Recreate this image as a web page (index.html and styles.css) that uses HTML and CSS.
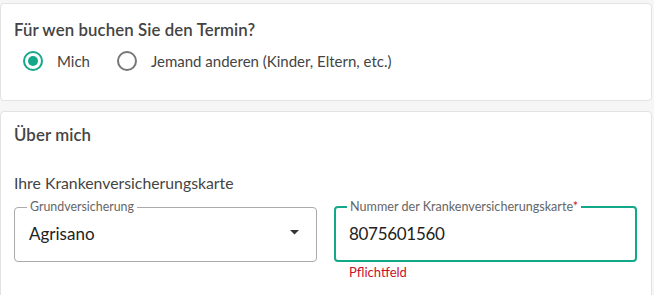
FILE: index.html
```html
<!DOCTYPE html>
<html lang="de">
<head>
<meta charset="utf-8">
<link rel="stylesheet" href="styles.css">
</head>
<body>
<div class="page">
  <section class="card card-who">
    <h2 class="title">Für wen buchen Sie den Termin?</h2>
    <div class="radios">
      <label class="radio">
        <span class="dot checked"></span>
        <span class="radio-text">Mich</span>
      </label>
      <label class="radio">
        <span class="dot"></span>
        <span class="radio-text">Jemand anderen (Kinder, Eltern, etc.)</span>
      </label>
    </div>
  </section>
  <section class="card card-me">
    <h2 class="title">Über mich</h2>
    <div class="subtitle">Ihre Krankenversicherungskarte</div>
    <div class="fields">
      <div class="field-wrap">
        <fieldset class="field">
          <legend class="legend">Grundversicherung</legend>
          <div class="value">Agrisano</div>
          <svg class="caret" width="10" height="5" viewBox="0 0 10 5"><path d="M0 0 L10 0 L5 5 Z" fill="#333"/></svg>
        </fieldset>
      </div>
      <div class="field-wrap">
        <fieldset class="field focused">
          <legend class="legend">Nummer der Krankenversicherungskarte<span class="req">*</span></legend>
          <div class="value">8075601560</div>
        </fieldset>
        <div class="error">Pflichtfeld</div>
      </div>
    </div>
  </section>
</div>
</body>
</html>
```

FILE: styles.css
```css
html, body {
  margin: 0;
  padding: 0;
  background: #f6f6f6;
  height: 295px;
  overflow: hidden;
}
body {
  font-family: Lato, "Noto Sans", sans-serif;
  color: #444;
  width: 654px;
}
.page {
  padding: 3px 2px 0 0;
  display: flex;
  flex-direction: column;
  gap: 10px;
}
.card {
  background: #fff;
  border: 1px solid #e2e2e2;
  border-radius: 4px;
  box-sizing: border-box;
}
.card-who {
  height: 98px;
  padding: 16px 13px 0;
}
.card-me {
  padding: 13px 13px 0;
  height: 200px;
}
.title {
  margin: 0;
  font-size: 16.8px;
  font-weight: 600;
  color: #444;
  line-height: 20px;
  letter-spacing: 0.1px;
}
.radios {
  display: flex;
  gap: 27px;
  margin-top: 11px;
  padding-left: 9px;
}
.radio {
  display: flex;
  align-items: center;
  gap: 14px;
  font-size: 15px;
  color: #444;
}
.dot {
  width: 16px;
  height: 16px;
  border: 2px solid #777;
  border-radius: 50%;
  display: flex;
  align-items: center;
  justify-content: center;
}
.dot.checked {
  border-color: #14a88b;
}
.dot.checked::after {
  content: "";
  width: 10px;
  height: 10px;
  border-radius: 50%;
  background: #14a88b;
}
.subtitle {
  margin-top: 28px;
  font-size: 15.8px;
  color: #444;
  line-height: 20px;
}
.fields {
  display: flex;
  gap: 17px;
  margin-top: 7px;
}
.field-wrap {
  width: 303px;
}
.field {
  margin: 0;
  box-sizing: border-box;
  height: 62px;
  border: 1px solid #aaa;
  border-radius: 4px;
  padding: 0 14px;
  position: relative;
  display: flex;
  align-items: center;
}
.field.focused {
  border: 2px solid #14a88b;
  padding: 0 13px;
}
.legend {
  font-size: 12.4px;
  color: #666;
  padding: 0 3px;
  margin-left: -2px;
  line-height: 14px;
}
.focused .legend {
  font-size: 12.6px;
}
.req {
  color: #c8102e;
}
.value {
  font-size: 17px;
  color: #222;
  margin-top: -8px;
}
.focused .value {
  letter-spacing: -0.3px;
}
.caret {
  position: absolute;
  right: 17px;
  top: 16px;
  width: 9px;
  height: 4.5px;
}
.error {
  color: #c8102e;
  font-size: 13px;
  margin: 2px 0 0 15px;
}
```
